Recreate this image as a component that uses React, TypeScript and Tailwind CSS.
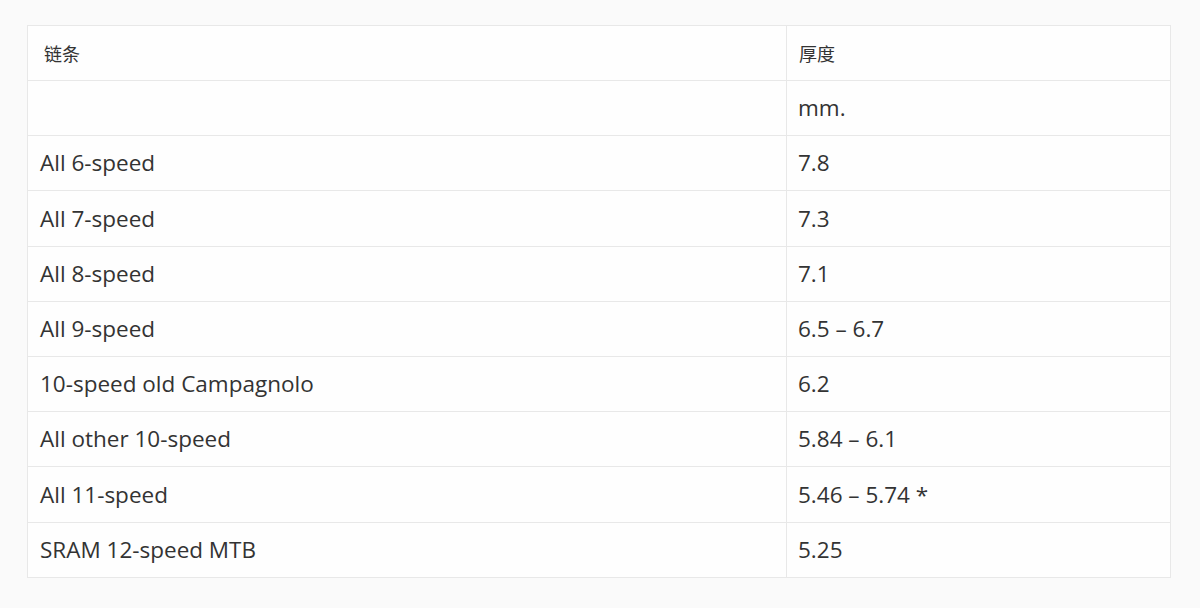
const rows: [string, string][] = [
  ["", "mm."],
  ["All 6-speed", "7.8"],
  ["All 7-speed", "7.3"],
  ["All 8-speed", "7.1"],
  ["All 9-speed", "6.5 – 6.7"],
  ["10-speed old Campagnolo", "6.2"],
  ["All other 10-speed", "5.84 – 6.1"],
  ["All 11-speed", "5.46 – 5.74 *"],
  ["SRAM 12-speed MTB", "5.25"],
]

export default function App() {
  return (
    <div
      className="w-[1200px] h-[608px] bg-[#fafafa] pt-[25px] pl-[27px] text-[#333]"
      style={{ fontFamily: '"Open Sans", "Noto Sans CJK SC", sans-serif' }}
    >
      <table className="w-[1144px] border-collapse bg-[#fefefe] border border-[#e8e8e8]">
        <tbody>
          <tr className="h-[55px]">
            <td className="w-[759px] border border-[#e8e8e8] pl-[16px] pt-[3px] text-[18px] align-middle">链条</td>
            <td className="border border-[#e8e8e8] pl-[12px] pt-[3px] text-[18px] align-middle">厚度</td>
          </tr>
          {rows.map(([a, b], i) => (
            <tr key={i} className="h-[55.2px]">
              <td className="border border-[#e8e8e8] pl-[12px] text-[22.5px] align-middle">{a}</td>
              <td className="border border-[#e8e8e8] pl-[11px] text-[22.5px] align-middle">{b}</td>
            </tr>
          ))}
        </tbody>
      </table>
    </div>
  )
}
